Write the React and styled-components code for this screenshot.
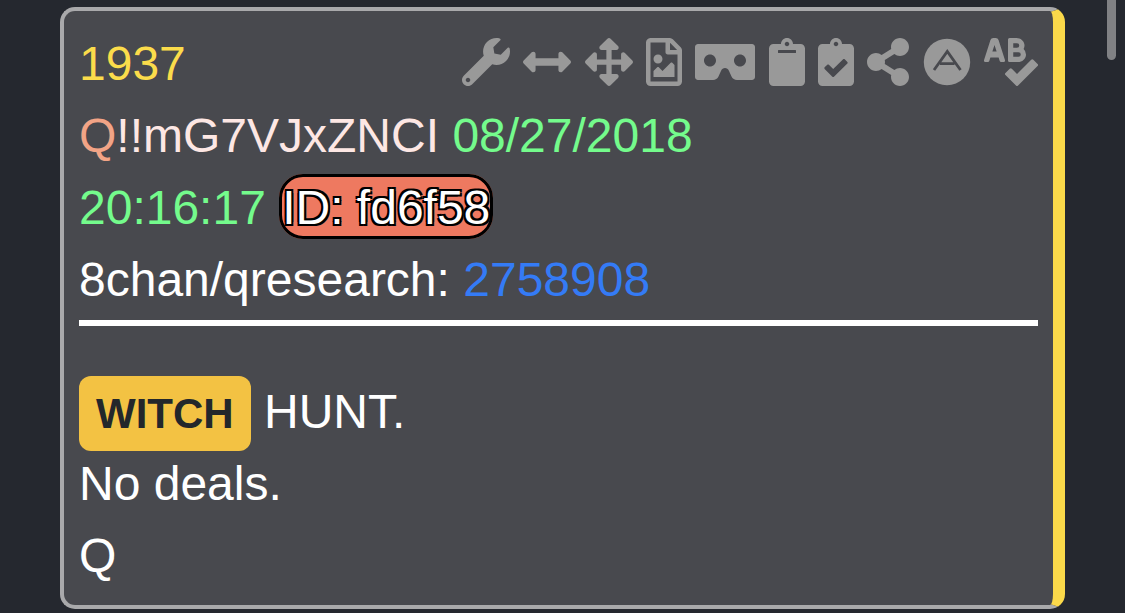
import React, { Fragment } from "react";
import styled, { createGlobalStyle } from "styled-components";
import {
  FaWrench,
  FaArrowsAltH,
  FaArrowsAlt,
  FaRegFileImage,
  FaVrCardboard,
  FaShareAlt,
  FaSpellCheck
} from "react-icons/fa";

const GlobalStyle = createGlobalStyle`
  * {
    box-sizing: border-box;
  }
  body {
    margin: 0;
    background: #25282f;
    color: #ffffff;
    font-family: "Liberation Sans", Arial, Helvetica, sans-serif;
    font-size: 48px;
    line-height: 72px;
  }
`;

const Page = styled.main`
  padding: 7px 60px 4px;
`;

const ScrollThumb = styled.div`
  position: fixed;
  top: 0;
  right: 9px;
  width: 9px;
  height: 60px;
  border-radius: 0 0 5px 5px;
  background: #808184;
`;

const Card = styled.article`
  padding: 17px 15px 13px;
  border: 4px solid #a9a9ab;
  border-right: 12px solid #fbd94a;
  border-radius: 15px;
  background: #48494e;
`;

const TitleRow = styled.header`
  display: flex;
  justify-content: space-between;
`;

const Link = styled.a`
  color: ${props => props.color};
  text-decoration: none;
`;

const Toolbar = styled.div`
  text-align: right;
`;

const IconButton = styled.button`
  display: inline-block;
  width: ${props => props.$width}px;
  padding: 0;
  border: 0;
  background: none;
  color: #999999;
  line-height: 48px;
  vertical-align: -6px;
  cursor: pointer;
  svg {
    display: block;
    width: 100%;
    height: 48px;
  }
`;

const Name = styled.span`
  color: #f2a486;
`;

const Trip = styled.span`
  color: #fde7e4;
`;

const Time = styled.time`
  color: #74fb8c;
`;

const PosterId = styled.span`
  padding: 4px 0 2px;
  border: 3px solid #000000;
  border-radius: 24px;
  background: #ee7960;
  text-shadow: -2px -2px 0 #000000, 2px -2px 0 #000000, -2px 2px 0 #000000,
    2px 2px 0 #000000;
`;

const Divider = styled.hr`
  height: 6px;
  margin: 4px 0 50px;
  border: 0;
  background: #ffffff;
`;

const Highlight = styled.mark`
  padding: 14px 17px;
  border-radius: 12px;
  background: #f3c243;
  color: #23272b;
  font-size: 42px;
  font-weight: bold;
  line-height: 48px;
`;

const ClipboardIcon = () => (
  <svg viewBox="0 0 384 512" fill="currentColor">
    <path
      fillRule="evenodd"
      d="M384 112v352c0 26.500-21.500 48-48 48H48c-26.500 0-48-21.500-48-48V112c0-26.500 21.500-48 48-48h80c0-35.300 28.700-64 64-64s64 28.700 64 64h80c26.500 0 48 21.500 48 48zM192 40c-13.300 0-24 10.700-24 24s10.700 24 24 24 24-10.700 24-24-10.700-24-24-24m96 114v-20a6 6 0 0 0-6-6H102a6 6 0 0 0-6 6v20a6 6 0 0 0 6 6h180a6 6 0 0 0 6-6z"
    />
  </svg>
);

const ClipboardCheckIcon = () => (
  <svg viewBox="0 0 384 512" fill="currentColor">
    <path
      fillRule="evenodd"
      d="M336 64h-80c0-35.300-28.700-64-64-64s-64 28.700-64 64H48C21.500 64 0 85.500 0 112v352c0 26.500 21.500 48 48 48h288c26.500 0 48-21.500 48-48V112c0-26.500-21.500-48-48-48zM192 40c13.300 0 24 10.700 24 24s-10.700 24-24 24-24-10.700-24-24 10.700-24 24-24zm121.200 231.800l-143 141.800c-4.700 4.700-12.300 4.600-17-.1l-82.600-83.300c-4.700-4.700-4.600-12.300.1-17L99.100 285c4.700-4.700 12.300-4.600 17 .1l46 46.400 106-105.200c4.700-4.700 12.300-4.600 17 .1l28.200 28.400c4.700 4.800 4.600 12.300-.1 17z"
    />
  </svg>
);

const ArchiveIcon = () => (
  <svg viewBox="0 0 48 48">
    <circle cx="24" cy="24" r="23.200" fill="currentColor" />
    <path
      d="M11 32 24.300 13.500 37.500 32M17 25.600h14.500"
      fill="none"
      stroke="#48494e"
      strokeWidth="2.800"
    />
  </svg>
);

const tools = [
  { label: "Settings", Icon: FaWrench, width: 48 },
  { label: "Widen", Icon: FaArrowsAltH, width: 48 },
  { label: "Expand", Icon: FaArrowsAlt, width: 48 },
  { label: "Save as image", Icon: FaRegFileImage, width: 36 },
  { label: "View", Icon: FaVrCardboard, width: 60 },
  { label: "Copy", Icon: ClipboardIcon, width: 36 },
  { label: "Copy post", Icon: ClipboardCheckIcon, width: 36 },
  { label: "Share", Icon: FaShareAlt, width: 42 },
  { label: "Archive", Icon: ArchiveIcon, width: 48 },
  { label: "Abbreviations", Icon: FaSpellCheck, width: 54 }
];

export default () => (
  <>
    <GlobalStyle />
    <Page>
      <Card>
        <TitleRow>
          <Link href="#1937" color="#fbdc4b">
            1937
          </Link>
          <Toolbar>
            {tools.map(({ label, Icon, width }) => (
              <Fragment key={label}>
                <IconButton type="button" aria-label={label} $width={width}>
                  <Icon />
                </IconButton>{" "}
              </Fragment>
            ))}
          </Toolbar>
        </TitleRow>
        <div>
          <Name>Q</Name>
          <Trip>!!mG7VJxZNCI</Trip> <Time>08/27/2018</Time>
        </div>
        <div>
          <Time>20:16:17</Time> <PosterId>ID: fd6f58</PosterId>
        </div>
        <div>
          8chan/qresearch:{" "}
          <Link href="#2758908" color="#347bf6">
            2758908
          </Link>
        </div>
        <Divider />
        <div>
          <Highlight>WITCH</Highlight> HUNT.
        </div>
        <div>No deals.</div>
        <div>Q</div>
      </Card>
    </Page>
    <ScrollThumb />
  </>
);
